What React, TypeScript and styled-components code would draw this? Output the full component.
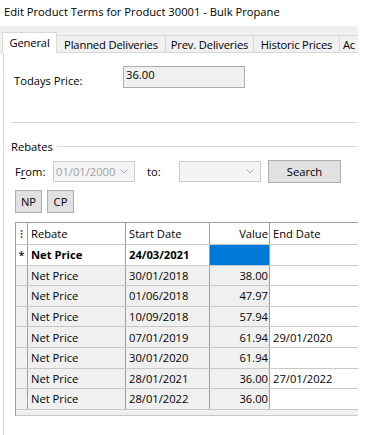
import React from 'react'
import styled, { createGlobalStyle } from 'styled-components'

const GlobalStyle = createGlobalStyle`
	body {
		margin: 0;
		background: #ffffff;
		font-family: 'Open Sans', 'Noto Sans', sans-serif;
		font-size: 11.2px;
		color: #000000;
	}
`

const Window = styled.div`
	width: 358px;
	height: 435px;
	overflow: hidden;
	background: #ffffff;
`

const Title = styled.div`
	height: 26px;
	line-height: 24px;
	padding-left: 4px;
	white-space: nowrap;
`

const TabStrip = styled.div`
	display: flex;
	align-items: flex-end;
	height: 26px;
	background: #f0f0f0;
	border-bottom: 1px solid #d9d9d9;
	padding-left: 3px;
	white-space: nowrap;
`

const Tab = styled.div<{ $active?: boolean; $width: number }>`
	flex: none;
	width: ${(p) => p.$width}px;
	box-sizing: border-box;
	text-align: center;
	letter-spacing: -0.15px;
	height: ${(p) => (p.$active ? 21 : 17)}px;
	line-height: ${(p) => (p.$active ? 19 : 17)}px;
	background: ${(p) => (p.$active ? '#ffffff' : '#f0f0f0')};
	border: 1px solid #d9d9d9;
	border-bottom: none;
	margin-bottom: ${(p) => (p.$active ? -1 : 0)}px;
	margin-left: -1px;
	position: relative;
	z-index: ${(p) => (p.$active ? 1 : 0)};
`

const Panel = styled.div`
	border-left: 1px solid #d9d9d9;
	margin-left: 3px;
	height: 372px;
	padding: 13px 0 0 7px;
`

const PriceRow = styled.div`
	display: flex;
	align-items: flex-start;
	margin-left: 3px;
`

const PriceLabel = styled.div`
	width: 109px;
	padding-top: 7px;
`

const PriceBox = styled.div`
	width: 116px;
	height: 18px;
	line-height: 13px;
	padding: 1px 2px;
	background: #f0f0f0;
	border: 1px solid #adadad;
`

const Divider = styled.div`
	height: 1px;
	background: #dadada;
	margin-top: 34px;
`

const GroupHeader = styled.div`
	display: flex;
	align-items: center;
	gap: 4px;
	margin-top: 16px;
	&::after {
		content: '';
		flex: 1;
		height: 1px;
		background: #dadada;
	}
`

const FilterRow = styled.div`
	display: flex;
	align-items: center;
	margin-top: 5px;
	margin-left: 4px;
	height: 24px;
`

const FieldLabel = styled.span<{ $width: number; $indent?: number }>`
	width: ${(p) => p.$width}px;
	padding-left: ${(p) => p.$indent ?? 0}px;
	u {
		text-decoration: underline;
		text-underline-offset: 2px;
	}
`

const Combo = styled.div<{ $width: number }>`
	display: flex;
	align-items: center;
	justify-content: space-between;
	width: ${(p) => p.$width}px;
	height: 21px;
	padding: 0 6px 0 2px;
	box-sizing: border-box;
	border: 1px solid #cccccc;
	background: #f4f4f4;
	color: #a0a0a0;
`

const Chevron = styled.svg`
	width: 8px;
	height: 5px;
`

const Button = styled.div<{ $width: number }>`
	display: flex;
	align-items: center;
	justify-content: center;
	width: ${(p) => p.$width}px;
	height: 23px;
	box-sizing: border-box;
	border: 1px solid #adadad;
	background: #e1e1e1;
`

const SearchButton = styled(Button)`
	margin-left: 7px;
`

const ButtonRow = styled.div`
	display: flex;
	gap: 5px;
	margin-top: 7px;
	margin-left: 4px;
`

const Grid = styled.div`
	margin-top: 9px;
	margin-left: 4px;
	border-top: 1px solid #a0a0a0;
	border-left: 1px solid #a0a0a0;
	width: 400px;
`

const Row = styled.div<{ $header?: boolean }>`
	display: grid;
	grid-template-columns: 12px 98px 84px 60px 146px;
	height: ${(p) => (p.$header ? 21 : 19.6)}px;
	border-bottom: 1px solid #c8c8c8;
`

const Cell = styled.div<{ $gray?: boolean; $right?: boolean; $bold?: boolean; $selected?: boolean }>`
	display: flex;
	align-items: center;
	justify-content: ${(p) => (p.$right ? 'flex-end' : 'flex-start')};
	padding: 0 1px 0 3px;
	background: ${(p) => (p.$selected ? '#0078d7' : p.$gray ? '#f0f0f0' : '#ffffff')};
	border-right: 1px solid #a0a0a0;
	font-weight: ${(p) => (p.$bold ? 700 : 400)};
	white-space: nowrap;
	overflow: hidden;
`

const Selector = styled.div<{ $gray?: boolean }>`
	display: flex;
	align-items: center;
	justify-content: center;
	background: ${(p) => (p.$gray ? '#f0f0f0' : '#ffffff')};
	border-right: 1px solid #a0a0a0;
	font-size: 10px;
	font-weight: 700;
	color: #333333;
`

const GridFooter = styled.div`
	height: 5px;
	background: #f0f0f0;
	border-bottom: 1px solid #c8c8c8;
`

const tabs = [
	{ label: 'General', width: 55 },
	{ label: 'Planned Deliveries', width: 110 },
	{ label: 'Prev. Deliveries', width: 89 },
	{ label: 'Historic Prices', width: 87 },
	{ label: 'Ac', width: 20 },
]

const rows = [
	{ start: '30/01/2018', value: '38.00', end: '' },
	{ start: '01/06/2018', value: '47.97', end: '' },
	{ start: '10/09/2018', value: '57.94', end: '' },
	{ start: '07/01/2019', value: '61.94', end: '29/01/2020' },
	{ start: '30/01/2020', value: '61.94', end: '' },
	{ start: '28/01/2021', value: '36.00', end: '27/01/2022' },
	{ start: '28/01/2022', value: '36.00', end: '' },
]

const DownArrow = () => (
	<Chevron viewBox="0 0 8 5">
		<path d="M0.5 0.5 L4 4 L7.5 0.5" fill="none" stroke="#a8a8a8" strokeWidth="1" />
	</Chevron>
)

export default function App() {
	return (
		<>
			<GlobalStyle />
			<Window>
				<Title>Edit Product Terms for Product 30001 - Bulk Propane</Title>
				<TabStrip>
					{tabs.map((t, i) => (
						<Tab key={t.label} $active={i === 0} $width={t.width}>
							{t.label}
						</Tab>
					))}
				</TabStrip>
				<Panel>
					<PriceRow>
						<PriceLabel>Todays Price:</PriceLabel>
						<PriceBox>36.00</PriceBox>
					</PriceRow>
					<Divider />
					<GroupHeader>Rebates</GroupHeader>
					<FilterRow>
						<FieldLabel $width={38}>
							F<u>r</u>om:
						</FieldLabel>
						<Combo $width={82}>
							01/01/2000
							<DownArrow />
						</Combo>
						<FieldLabel $width={32} $indent={12}>
							to:
						</FieldLabel>
						<Combo $width={82}>
							<span />
							<DownArrow />
						</Combo>
						<SearchButton $width={73}>Search</SearchButton>
					</FilterRow>
					<ButtonRow>
						<Button $width={27}>NP</Button>
						<Button $width={27}>CP</Button>
					</ButtonRow>
					<Grid>
						<Row $header>
							<Selector>⁝</Selector>
							<Cell>Rebate</Cell>
							<Cell>Start Date</Cell>
							<Cell $right>Value</Cell>
							<Cell>End Date</Cell>
						</Row>
						<Row>
							<Selector>*</Selector>
							<Cell $bold>Net Price</Cell>
							<Cell $bold>24/03/2021</Cell>
							<Cell $selected />
							<Cell />
						</Row>
						{rows.map((r) => (
							<Row key={r.start}>
								<Selector $gray />
								<Cell $gray>Net Price</Cell>
								<Cell $gray>{r.start}</Cell>
								<Cell $gray $right>
									{r.value}
								</Cell>
								<Cell>{r.end}</Cell>
							</Row>
						))}
						<GridFooter />
					</Grid>
				</Panel>
			</Window>
		</>
	)
}
